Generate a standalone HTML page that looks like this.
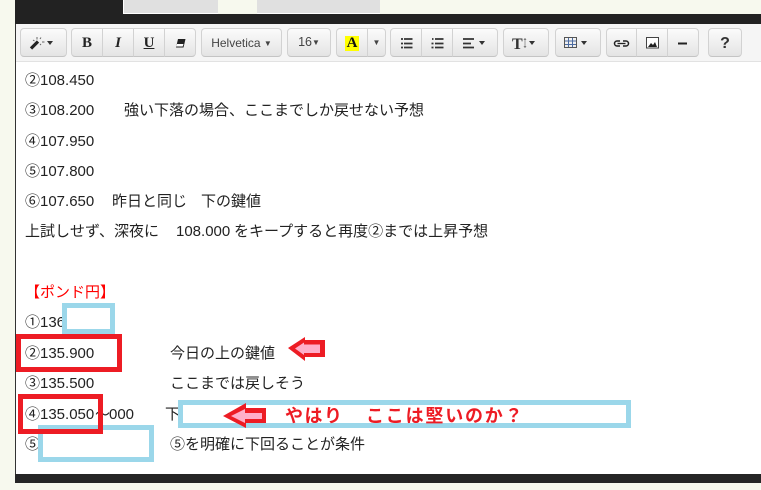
<!DOCTYPE html>
<html><head><meta charset="utf-8">
<style>
html,body{margin:0;padding:0;width:761px;height:490px;overflow:hidden;background:#f7f9ee;}
*{box-sizing:border-box;}
.a{position:absolute;}
.t{position:absolute;font:15px/20px "Liberation Sans","Noto Sans CJK JP",sans-serif;color:#222;white-space:pre;}
.b{position:absolute;top:28px;height:29px;background:linear-gradient(#fbfbfb,#e4e4e4);border:1px solid #d2d2d2;border-bottom-color:#c4c4c4;border-radius:4px;font:12px/27px "Liberation Sans",sans-serif;color:#444;text-align:center;white-space:pre;}
.m{border-radius:0;}
.l{border-radius:4px 0 0 4px;}
.r{border-radius:0 4px 4px 0;}
.bx{position:absolute;border-style:solid;}
svg{position:absolute;left:0;top:0;}
.c{font-size:8px;vertical-align:1px;}
</style></head>
<body>
<div class="a" style="left:15px;top:0;width:108px;height:24px;background:#222"></div>
<div class="a" style="left:123px;top:0;width:638px;height:14px;background:#f7f9ee"></div>
<div class="a" style="left:123px;top:0;width:95px;height:14px;background:#e0e0e0;border-left:1px solid #fff;border-bottom:1px solid #fff"></div>
<div class="a" style="left:257px;top:0;width:123px;height:14px;background:#e0e0e0;border-bottom:1px solid #fff"></div>
<div class="a" style="left:15px;top:14px;width:746px;height:10px;background:#222"></div>
<div class="a" style="left:15px;top:24px;width:746px;height:38px;background:#f5f5f5;border-bottom:1px solid #e2e2e2"></div>
<div class="a" style="left:15px;top:62px;width:746px;height:412px;background:#fff"></div>
<div class="a" style="left:15px;top:24px;width:1px;height:450px;background:#333"></div>
<div class="a" style="left:15px;top:474px;width:746px;height:9px;background:#262626"></div>

<div class="b" style="left:20px;width:47px"></div>
<div class="b l" style="left:71px;width:32px;font:bold 15px/29px 'Liberation Serif',serif;color:#222">B</div>
<div class="b m" style="left:102px;width:32px;font:italic bold 15px/29px 'Liberation Serif',serif;color:#222">I</div>
<div class="b m" style="left:133px;width:32px;font:bold 15px/29px 'Liberation Serif',serif;color:#222;text-decoration:underline">U</div>
<div class="b r" style="left:164px;width:32px"></div>
<div class="b" style="left:201px;width:81px;line-height:28px">Helvetica <span class="c">▼</span></div>
<div class="b" style="left:287px;width:44px;font-size:12.500px;line-height:27px">16<span class="c">▼</span></div>
<div class="b l" style="left:336px;width:32px"><span style="background:#ff0;color:#111;font:bold 15px/15px 'Liberation Serif',serif;padding:0 1.500px;display:inline-block;margin-top:7px">A</span></div>
<div class="b r" style="left:367px;width:19px;font-size:8px">▼</div>
<div class="b l" style="left:390px;width:32px"></div>
<div class="b m" style="left:421px;width:32px"></div>
<div class="b r" style="left:452px;width:46px"></div>
<div class="b" style="left:503px;width:46px"></div>
<div class="b" style="left:555px;width:46px"></div>
<div class="b l" style="left:606px;width:31px"></div>
<div class="b m" style="left:636px;width:32px"></div>
<div class="b r" style="left:667px;width:32px"></div>
<div class="b" style="left:708px;width:34px;font:bold 16px/29px 'Liberation Sans',sans-serif;color:#333">?</div>

<svg width="761" height="490" viewBox="0 0 761 490">
<!-- wand -->
<path d="M31 48.500L38 41.500" stroke="#222" stroke-width="3.200"/>
<path d="M37 37v2.500M33 40l1.500 1M42 42h2.500M41 37.500l-1 1.500M41 45l-1-1" stroke="#666" stroke-width="1"/>
<path d="M47 41h6l-3 4z" fill="#333"/>
<!-- eraser -->
<path d="M178 39h7.500l-2 8.500h-7.500z" fill="#222"/><path d="M177 44h6.500l-.8 2.500h-6.500z" fill="#fff"/>
<!-- lists -->
<g stroke="#333" stroke-width="1.700">
<path d="M404 39h8.500M404 43.500h8.500M404 47.500h8.500"/>
<path d="M435 39h8.500M435 43.500h8.500M435 47.500h8.500"/>
<path d="M463 39h11M463 43.500h8M463 47.500h11"/>
</g>
<g stroke="#333" stroke-width="1.700"><path d="M401 39h2M401 43.500h2M401 47.500h2M432 39h1.500M431.500 43.500h2M431.500 47.500h2"/></g>
<path d="M479 41h6l-3 4z" fill="#333"/>
<!-- T -->
<text x="512" y="49" font-family="Liberation Serif" font-weight="bold" font-size="16" fill="#333">T</text>
<path d="M525 38v10" stroke="#999" stroke-width="1"/><path d="M523.500 40l1.500-2 1.500 2zM523.500 46l1.500 2 1.500-2z" fill="#777"/>
<path d="M529 41h6l-3 4z" fill="#333"/>
<!-- table -->
<g fill="none"><path d="M564.500 37.500h12v10h-12z" stroke="#555"/><path d="M568.500 38v9M572.500 38v9" stroke="#4a6aa0"/><path d="M565 41h11M565 44.500h11" stroke="#4a6aa0"/></g>
<path d="M581 41h6l-3 4z" fill="#333"/>
<!-- link -->
<g stroke="#222" stroke-width="1.500" fill="none"><path d="M620 41h-3a2.500 2.500 0 0 0 0 5h3M623 41h3a2.500 2.500 0 0 1 0 5h-3"/><path d="M617.500 43.500h8" stroke-width="1.300"/></g>
<!-- picture -->
<rect x="646.500" y="37.500" width="12" height="10.500" fill="#fff" stroke="#444"/>
<path d="M648 47l3-4 2 2 2-3 2 5z" fill="#222"/>
<!-- hr -->
<path d="M678 43.500h9" stroke="#222" stroke-width="2"/>
</svg>

<div class="t" style="left:25px;top:71px">②108.450</div>
<div class="t" style="left:25px;top:101px">③108.200</div>
<div class="t" style="left:124px;top:101px">強い下落の場合、ここまでしか戻せない予想</div>
<div class="t" style="left:25px;top:132px">④107.950</div>
<div class="t" style="left:25px;top:162px">⑤107.800</div>
<div class="t" style="left:25px;top:192px">⑥107.650</div>
<div class="t" style="left:112px;top:192px">昨日と同じ</div>
<div class="t" style="left:201px;top:192px">下の鍵値</div>
<div class="t" style="left:25px;top:222px">上試しせず、深夜に</div>
<div class="t" style="left:176px;top:222px">108.000</div>
<div class="t" style="left:234px;top:222px">をキープすると再度②までは上昇予想</div>
<div class="t" style="left:25px;top:283px;color:#f00">【ポンド円】</div>
<div class="t" style="left:25px;top:313px">①136</div>
<div class="t" style="left:25px;top:344px">②135.900</div>
<div class="t" style="left:170px;top:344px">今日の上の鍵値</div>
<div class="t" style="left:25px;top:374px">③135.500</div>
<div class="t" style="left:170px;top:374px">ここまでは戻しそう</div>
<div class="t" style="left:25px;top:405px">④135.050</div>
<div class="t" style="left:95px;top:405px">～</div>
<div class="t" style="left:109px;top:405px">000</div>
<div class="t" style="left:165px;top:405px">下</div>
<div class="t" style="left:25px;top:435px">⑤</div>
<div class="t" style="left:170px;top:435px">⑤を明確に下回ることが条件</div>

<div class="bx" style="left:62px;top:303px;width:53px;height:31px;border-width:5px;border-color:#9bd7ea;background:#fff"></div>
<div class="bx" style="left:178px;top:400px;width:453px;height:28px;border-width:5px;border-color:#9bd7ea;background:#fff"></div>
<div class="bx" style="left:38px;top:425px;width:116px;height:37px;border-width:5px;border-color:#9bd7ea;background:#fff"></div>
<div class="bx" style="left:16px;top:334px;width:106px;height:38px;border-width:5px;border-color:#ed1c24"></div>
<div class="bx" style="left:18px;top:394px;width:85px;height:40px;border-width:5px;border-color:#ed1c24"></div>

<svg width="761" height="490" viewBox="0 0 761 490">
<path d="M288 348L305 337V340H325V357H305V361z" fill="#ed1c24"/>
<path d="M295 348.500L304 342.500V344.500H320V353H304V355z" fill="#ffaec9"/>
<path d="M223 416L246 403V408H266V423H246V428z" fill="#ed1c24"/>
<path d="M231 416L245 409V413H262V419H245V423z" fill="#ffaec9"/>
</svg>
<div class="t" style="left:285px;top:406px;color:#ed1c24;font-size:18px;font-weight:bold;letter-spacing:1.500px">やはり</div>
<div class="t" style="left:366px;top:406px;color:#ed1c24;font-size:18px;font-weight:bold;letter-spacing:1.800px">ここは堅いのか？</div>
</body></html>
